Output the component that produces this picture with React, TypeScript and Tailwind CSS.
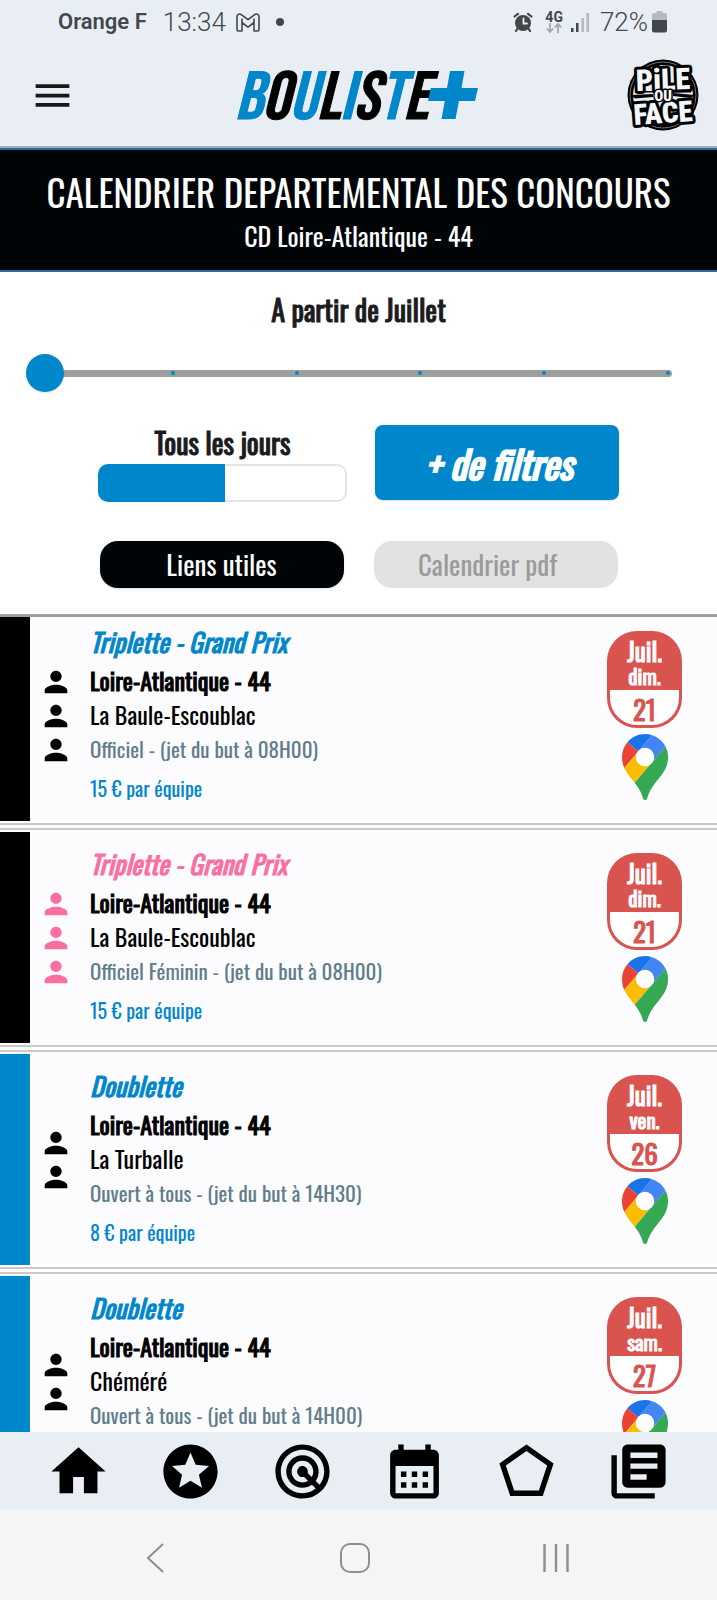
import {
  MdCalendarMonth,
  MdHome,
  MdLibraryBooks,
  MdMenu,
  MdOutlinePentagon,
  MdPerson,
  MdRadar,
  MdStars,
} from "react-icons/md";

type Contest = {
  title: string;
  city: string;
  detail: string;
  price: string;
  players: number;
  month: string;
  weekday: string;
  day: string;
  bar: string;
  titleColor: string;
  iconColor: string;
};

const contests: Contest[] = [
  {
    title: "Triplette - Grand Prix",
    city: "La Baule-Escoublac",
    detail: "Officiel - (jet du but à 08H00)",
    price: "15 € par équipe",
    players: 3,
    month: "Juil.",
    weekday: "dim.",
    day: "21",
    bar: "bg-black",
    titleColor: "text-[#0086cb]",
    iconColor: "text-black",
  },
  {
    title: "Triplette - Grand Prix",
    city: "La Baule-Escoublac",
    detail: "Officiel Féminin - (jet du but à 08H00)",
    price: "15 € par équipe",
    players: 3,
    month: "Juil.",
    weekday: "dim.",
    day: "21",
    bar: "bg-black",
    titleColor: "text-[#fb6fa0]",
    iconColor: "text-[#fb6fa0]",
  },
  {
    title: "Doublette",
    city: "La Turballe",
    detail: "Ouvert à tous - (jet du but à 14H30)",
    price: "8 € par équipe",
    players: 2,
    month: "Juil.",
    weekday: "ven.",
    day: "26",
    bar: "bg-[#0086cb]",
    titleColor: "text-[#0086cb]",
    iconColor: "text-black",
  },
  {
    title: "Doublette",
    city: "Chéméré",
    detail: "Ouvert à tous - (jet du but à 14H00)",
    price: "8 € par équipe",
    players: 2,
    month: "Juil.",
    weekday: "sam.",
    day: "27",
    bar: "bg-[#0086cb]",
    titleColor: "text-[#0086cb]",
    iconColor: "text-black",
  },
];

const tabs = [
  { label: "Accueil", Icon: MdHome },
  { label: "Favoris", Icon: MdStars },
  { label: "Autour de moi", Icon: MdRadar },
  { label: "Calendrier", Icon: MdCalendarMonth },
  { label: "Terrains", Icon: MdOutlinePentagon },
  { label: "Actualités", Icon: MdLibraryBooks },
];

function StatusBar() {
  return (
    <div className="flex h-11 shrink-0 items-center justify-between pr-[50px] pl-[58px] font-['Roboto',sans-serif] text-[#43474b]">
      <div className="flex items-center">
        <span className="text-[22px] leading-none font-semibold">Orange F</span>
        <span className="ml-4 text-[26px] leading-none font-light">13:34</span>
        <svg className="ml-2.5 h-[19px] w-6" viewBox="0 0 24 19" fill="none" stroke="currentColor" strokeWidth="1.6" strokeLinejoin="round">
          <path d="M1 3.500C1 1.200 3.500.3 5.300 1.600L12 6.700l6.700-5.100C20.500.3 23 1.200 23 3.500V16.500c0 1-.5 1.500-1.500 1.500H18V9.500l-6 4.700-6-4.700V18H2.500C1.500 18 1 17.500 1 16.500z" />
          <path d="M6 9.500V5.500M18 9.500V5.500" />
        </svg>
        <span className="ml-4 size-2 rounded-full bg-[#43474b]" />
      </div>
      <div className="flex items-center">
        <svg className="size-5" viewBox="0 0 20 20" fill="none" stroke="currentColor" strokeLinecap="round">
          <circle cx="10" cy="11" r="8" fill="currentColor" stroke="none" />
          <path d="M1.500 4.500 5 1.800M18.500 4.500 15 1.800M4.500 16.500 3 19M15.500 16.500 17 19" strokeWidth="2.200" />
          <path d="M10.500 6.500V11.500H14" stroke="#e8eef4" strokeWidth="1.800" />
        </svg>
        <div className="ml-3 flex flex-col items-center">
          <span className="text-[14px] leading-3 font-bold">4G</span>
          <svg className="h-[10px] w-4" viewBox="0 0 16 10" fill="none" stroke="#a3a8ad" strokeWidth="1.800">
            <path d="M4 0V9M.8 5.500 4 9 7.200 5.500M12 10V1M8.800 4.500 12 1 15.200 4.500" />
          </svg>
        </div>
        <svg className="ml-2 h-5 w-[19px]" viewBox="0 0 19 20">
          <path fill="#43474b" d="M0 16h2.500v4H0zM5 11h2.500v9H5z" />
          <path fill="#b5babf" d="M10.500 6H13v14h-2.500zM15.500 1H18v19h-2.500z" />
        </svg>
        <span className="ml-2.5 text-[26px] leading-none font-light">72%</span>
        <svg className="ml-1 h-[22px] w-[15px]" viewBox="0 0 15 22">
          <path fill="#b5babf" d="M4.500 0h6v2H13a2 2 0 0 1 2 2v6H0V4a2 2 0 0 1 2-2h2.500z" />
          <path fill="#43474b" d="M0 9h15v10.500a2 2 0 0 1-2 2H2a2 2 0 0 1-2-2z" />
        </svg>
      </div>
    </div>
  );
}

function BoulisteLogo() {
  return (
    <div className="flex items-center pr-4">
      <span className="pt-2 font-['Bebas_Neue','Oswald',sans-serif] text-[68px] leading-[68px] font-semibold text-black italic [-webkit-text-stroke:1px]">
        <span className="text-[#0086cb]">B</span>O<span className="text-[#0086cb]">U</span>L
        <span className="text-[#0086cb]">I</span>S<span className="text-[#0086cb]">T</span>E
      </span>
      <svg className="h-12 w-[50px]" viewBox="0 0 50 48">
        <path fill="#0086cb" d="M22 0h14.500L33.500 17H50l-3 13H31l-3.500 18H13.500L16.800 30H0l2.800-13H19z" />
      </svg>
    </div>
  );
}

function PileOuFaceLogo() {
  return (
    <svg className="size-[72px] overflow-visible" viewBox="0 0 72 72" role="img" aria-label="Pile ou Face">
      <circle cx="36" cy="36" r="35.500" fill="#000" />
      <circle cx="36" cy="36" r="33" fill="none" stroke="#8d9195" strokeWidth="0.800" />
      <circle cx="36" cy="36" r="30" fill="#e8eef4" />
      <path fill="#000" d="M8 32h56v1.500H8zM4 36l22-1v3L8 39.500zM68 36l-22-2v3l18 2zM30 7h12v3H30zM28 63h14v3H28z" />
      <g
        className="font-['Roboto_Condensed','Oswald',sans-serif] font-black"
        fill="#f4f8fb"
        stroke="#000"
        strokeLinejoin="round"
        paintOrder="stroke"
        textAnchor="middle"
      >
        <text x="36" y="31" fontSize="30" strokeWidth="6" transform="rotate(-2 36 20)">
          PiLE
        </text>
        <text x="36" y="64" fontSize="29" strokeWidth="6" transform="rotate(-4 36 54)">
          FACE
        </text>
        <text x="36" y="42" fontSize="15" strokeWidth="3">
          OU
        </text>
      </g>
    </svg>
  );
}

function MapPin() {
  return (
    <svg className="h-[66px] w-[46px]" viewBox="0 0 92.300 132.300" role="img" aria-label="Voir sur la carte">
      <path fill="#1a73e8" d="M60.200 2.200C55.800.8 51 0 46.100 0 32 0 19.300 6.400 10.800 16.500l21.800 18.300L60.200 2.200z" />
      <path fill="#ea4335" d="M10.800 16.500C4.100 24.500 0 34.900 0 46.100c0 8.700 1.700 15.700 4.600 22l28-33.300-21.800-18.300z" />
      <path
        fill="#4285f4"
        d="M46.200 28.500c9.800 0 17.700 7.900 17.700 17.700 0 4.300-1.600 8.300-4.200 11.400 0 0 13.900-16.600 27.500-32.700-5.600-10.800-15.300-19-27-22.700L32.600 34.800c3.300-3.800 8.100-6.300 13.600-6.300"
      />
      <path
        fill="#fbbc04"
        d="M46.200 63.800c-9.800 0-17.700-7.900-17.700-17.700 0-4.300 1.500-8.300 4.100-11.300l-28 33.300c4.800 10.600 12.800 19.200 21 29.900l34.100-40.500c-3.300 3.900-8.100 6.300-13.500 6.300"
      />
      <path
        fill="#34a853"
        d="M59.100 109.200c15.400-24.100 33.300-35 33.300-63 0-7.700-1.900-14.900-5.200-21.300L25.600 98c2.600 3.400 5.300 7.300 7.900 11.300 9.400 14.500 6.800 23.100 12.800 23.100s3.400-8.700 12.800-23.200"
      />
      <circle cx="46.200" cy="46.200" r="18.500" fill="#fff" />
    </svg>
  );
}

function Filters() {
  return (
    <section className="shrink-0 border-b-[3px] border-[#9e9e9e] bg-white pt-5 pb-[26px] text-[#1b1b1e]">
      <label htmlFor="month" className="block text-center text-[28px] leading-9 [-webkit-text-stroke:1px]">
        A partir de Juillet
      </label>
      <div className="mt-[26px] grid px-[26px]">
        <div className="col-start-1 row-start-1 mx-[19px] flex h-[7px] items-center justify-between self-center rounded-full bg-[#9e9e9e] px-0.5">
          {[0, 1, 2, 3, 4, 5].map((n) => (
            <span key={n} className="size-1 rounded-full bg-[#0086cb]" />
          ))}
        </div>
        <input
          id="month"
          type="range"
          min={0}
          max={5}
          defaultValue={0}
          className="z-10 col-start-1 row-start-1 h-[38px] w-full appearance-none bg-transparent [&::-webkit-slider-thumb]:size-[38px] [&::-webkit-slider-thumb]:appearance-none [&::-webkit-slider-thumb]:rounded-full [&::-webkit-slider-thumb]:bg-[#0086cb] [&::-webkit-slider-thumb]:shadow-sm"
        />
      </div>
      <div className="mt-[33px] flex justify-center gap-7">
        <div className="flex w-[249px] flex-col gap-[3px]">
          <label htmlFor="days" className="text-center text-[28px] leading-9 [-webkit-text-stroke:1px]">
            Tous les jours
          </label>
          <input
            id="days"
            type="checkbox"
            className="h-[38px] w-full appearance-none rounded-[10px] border-2 border-transparent bg-[linear-gradient(90deg,#0086cb_51%,transparent_51%),linear-gradient(#ffffff,#ffffff),linear-gradient(#e4e4e6,#e4e4e6)] bg-origin-border [background-clip:border-box,padding-box,border-box]"
          />
        </div>
        <button className="h-[75px] w-[244px] rounded-lg bg-[#0086cb] pl-1 text-[38px] leading-none text-white italic shadow [-webkit-text-stroke:2px]">
          + de filtres
        </button>
      </div>
      <div className="mt-[39px] flex justify-center gap-[30px] text-[27px] leading-none">
        <button className="h-[47px] w-[244px] rounded-[18px] bg-[#000407] text-white shadow">Liens utiles</button>
        <button disabled className="h-[47px] w-[244px] rounded-[18px] bg-[#e2e2e2] pr-4 text-[#9b9b9b]">
          Calendrier pdf
        </button>
      </div>
    </section>
  );
}

function ContestCard({ contest }: { contest: Contest }) {
  return (
    <li>
      <article className="flex bg-[#fcfcff]">
        <div className={`w-[30px] shrink-0 ${contest.bar}`} />
        <div className={`flex w-[52px] shrink-0 flex-col items-center justify-center pr-px ${contest.iconColor}`}>
          {Array.from({ length: contest.players }, (_, n) => (
            <MdPerson key={n} size={34} />
          ))}
        </div>
        <div className="min-w-0 flex-1 pt-3 pb-[13px] pl-2">
          <h2 className={`text-[26px] leading-10 italic [-webkit-text-stroke:1px] ${contest.titleColor}`}>
            {contest.title}
          </h2>
          <p className="text-[24px] leading-9 text-black [-webkit-text-stroke:1px]">Loire-Atlantique - 44</p>
          <p className="text-[24px] leading-8 text-black">{contest.city}</p>
          <p className="text-[21px] leading-[38px] text-[#607d8b]">{contest.detail}</p>
          <p className="text-[20px] leading-10 text-[#0086cb]">{contest.price}</p>
        </div>
        <div className="flex shrink-0 flex-col items-center gap-1.5 pt-[21px] pr-[35px]">
          <time className="flex w-[75px] flex-col rounded-[30px] bg-[#d9534f] px-[3px] pt-[7px] pb-[3px] text-center">
            <span className="text-[25px] leading-[26px] text-white [-webkit-text-stroke:1px]">{contest.month}</span>
            <span className="mb-0.5 text-[21px] leading-6 text-white [-webkit-text-stroke:1px]">{contest.weekday}</span>
            <span className="rounded-b-[27px] bg-white pt-[3px] text-[27px] leading-8 text-[#d9534f] [-webkit-text-stroke:1px]">
              {contest.day}
            </span>
          </time>
          <a href="#carte">
            <MapPin />
          </a>
        </div>
      </article>
      <div className="my-0.5 h-[7px] border-y-2 border-[#c8c9ce]" />
    </li>
  );
}

export default function App() {
  return (
    <div className="flex h-screen flex-col overflow-hidden bg-white font-['Oswald',sans-serif]">
      <div className="shrink-0 border-b-2 border-[#9fb0b5] bg-[#e8eef4]">
        <StatusBar />
        <header className="grid h-[102px] grid-cols-[1fr_auto_1fr] items-center pr-[18px] pl-[30px]">
          <button aria-label="Menu" className="justify-self-start text-[#16191c]">
            <MdMenu size={45} />
          </button>
          <BoulisteLogo />
          <div className="justify-self-end">
            <PileOuFaceLogo />
          </div>
        </header>
      </div>
      <div className="shrink-0 border-y-2 border-[#1f6f9c] bg-[#000407] py-4 text-center text-white">
        <h1 className="text-[37px] leading-[52px]">CALENDRIER DEPARTEMENTAL DES CONCOURS</h1>
        <p className="text-[26px] leading-9">CD Loire-Atlantique - 44</p>
      </div>
      <Filters />
      <main className="min-h-0 flex-1 overflow-hidden">
        <ul className="-mt-[7px]">
          {contests.map((contest, n) => (
            <ContestCard key={n} contest={contest} />
          ))}
        </ul>
      </main>
      <nav className="flex h-[78px] shrink-0 items-center bg-[#e8eef4] px-[22px]">
        {tabs.map(({ label, Icon }) => (
          <button key={label} aria-label={label} className="flex flex-1 justify-center text-black">
            <Icon size={65} />
          </button>
        ))}
      </nav>
      <div className="flex h-[90px] shrink-0 items-center bg-[#f5f5f5] pt-1.5 pr-[61px] pl-[55px] text-[#8e8e8e]">
        <button aria-label="Retour" className="flex flex-1 justify-center">
          <svg className="h-[30px] w-[18px]" viewBox="0 0 18 30" fill="none" stroke="currentColor" strokeWidth="2">
            <path d="M17 1 2 15l15 14" />
          </svg>
        </button>
        <button aria-label="Écran d'accueil" className="flex flex-1 justify-center">
          <svg className="size-[30px]" viewBox="0 0 30 30" fill="none" stroke="currentColor" strokeWidth="2">
            <rect x="1" y="1" width="28" height="28" rx="9" />
          </svg>
        </button>
        <button aria-label="Applications récentes" className="flex flex-1 justify-center">
          <svg className="h-7 w-[26px]" viewBox="0 0 26 28" fill="none" stroke="currentColor" strokeWidth="2.400">
            <path d="M1.500 0v28M13 0v28M24.500 0v28" />
          </svg>
        </button>
      </div>
    </div>
  );
}
